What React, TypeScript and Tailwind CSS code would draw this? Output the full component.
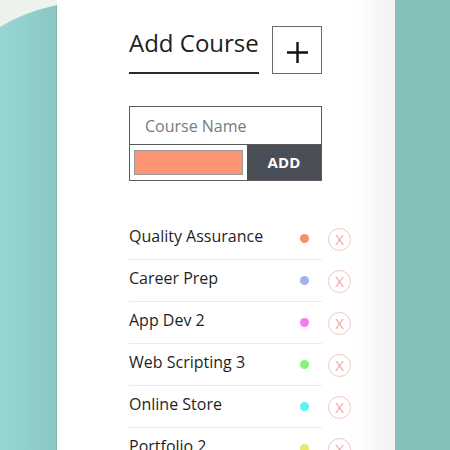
import { useState } from 'react';

interface Course {
  name: string;
  color: string;
}

const courses: Course[] = [
  { name: 'Quality Assurance', color: '#f98e6d' },
  { name: 'Career Prep', color: '#a3b1ec' },
  { name: 'App Dev 2', color: '#f47cf0' },
  { name: 'Web Scripting 3', color: '#86f47a' },
  { name: 'Online Store', color: '#5cf2f6' },
  { name: 'Portfolio 2', color: '#e8ea68' },
];

export default function App() {
  const [name, setName] = useState('');

  return (
    <div className="flex w-[450px] h-[450px] overflow-hidden font-['Open_Sans',sans-serif]">
      {/* left backdrop */}
      <div className="relative w-[57px] shrink-0 bg-[linear-gradient(to_right,#97d7d2,#8bc7c2)] border-r border-[#7fb6b1]">
        <svg className="absolute inset-0" width="57" height="450" viewBox="0 0 57 450">
          <path d="M0 0 H57 V5 Q24 12 0 27 Z" fill="#eef2ec" />
        </svg>
      </div>

      {/* panel */}
      <div className="w-[338px] shrink-0 bg-[linear-gradient(to_right,#ffffff_0%,#ffffff_88%,#f2f2f2_100%)] pl-[72px]">
        {/* heading */}
        <div className="mt-[26px] flex items-end">
          <div className="w-[130px] pt-[1px] pb-[13px] border-b-2 border-[#2b2b2b]">
            <h1 className="text-[24px] leading-[32px] text-[#1d1d1d]">Add Course</h1>
          </div>
          <button className="ml-[13px] w-[50px] h-[48px] border border-[#6b6b6b] flex items-center justify-center bg-white">
            <svg className="mt-[4px]" width="21" height="21" viewBox="0 0 21 21">
              <path d="M10.5 0 V21 M0 10.5 H21" stroke="#111" strokeWidth="2.4" />
            </svg>
          </button>
        </div>

        {/* form */}
        <div className="mt-[32px] w-[193px] border border-[#5a5a5a]">
          <input
            value={name}
            onChange={(e) => setName(e.target.value)}
            placeholder="Course Name"
            className="block w-full h-[38px] px-[15px] text-[16px] text-[#333] placeholder:text-[#7a7a7a] outline-none border-b border-[#5a5a5a]"
          />
          <div className="flex h-[35px]">
            <div className="w-[117px] flex items-center justify-center bg-white">
              <div className="w-[109px] h-[25px] bg-[#fd9473] border border-[#9a9a9a]" />
            </div>
            <button className="flex-1 bg-[#4a4f57] text-white font-bold text-[15px] tracking-[0.2px]">ADD</button>
          </div>
        </div>

        {/* course list */}
        <ul className="mt-[37px]">
          {courses.map((course) => (
            <li key={course.name} className="flex items-center">
              <div className="w-[193px] h-[42px] border-b border-[#ececec] flex items-center">
                <span className="flex-1 pb-[6px] text-[16px] leading-[22px] text-[#1f1f1f]">{course.name}</span>
                <span className="w-[9px] h-[9px] rounded-full mr-[13px]" style={{ backgroundColor: course.color }} />
              </div>
              <button className="ml-[6px] w-[23px] h-[23px] rounded-full border border-[#f3c4c4] text-[#f5a6a6] text-[15px] leading-none flex items-center justify-center">
                X
              </button>
            </li>
          ))}
        </ul>
      </div>

      {/* right backdrop */}
      <div className="flex-1 bg-[#86c0bb]" />
    </div>
  );
}
